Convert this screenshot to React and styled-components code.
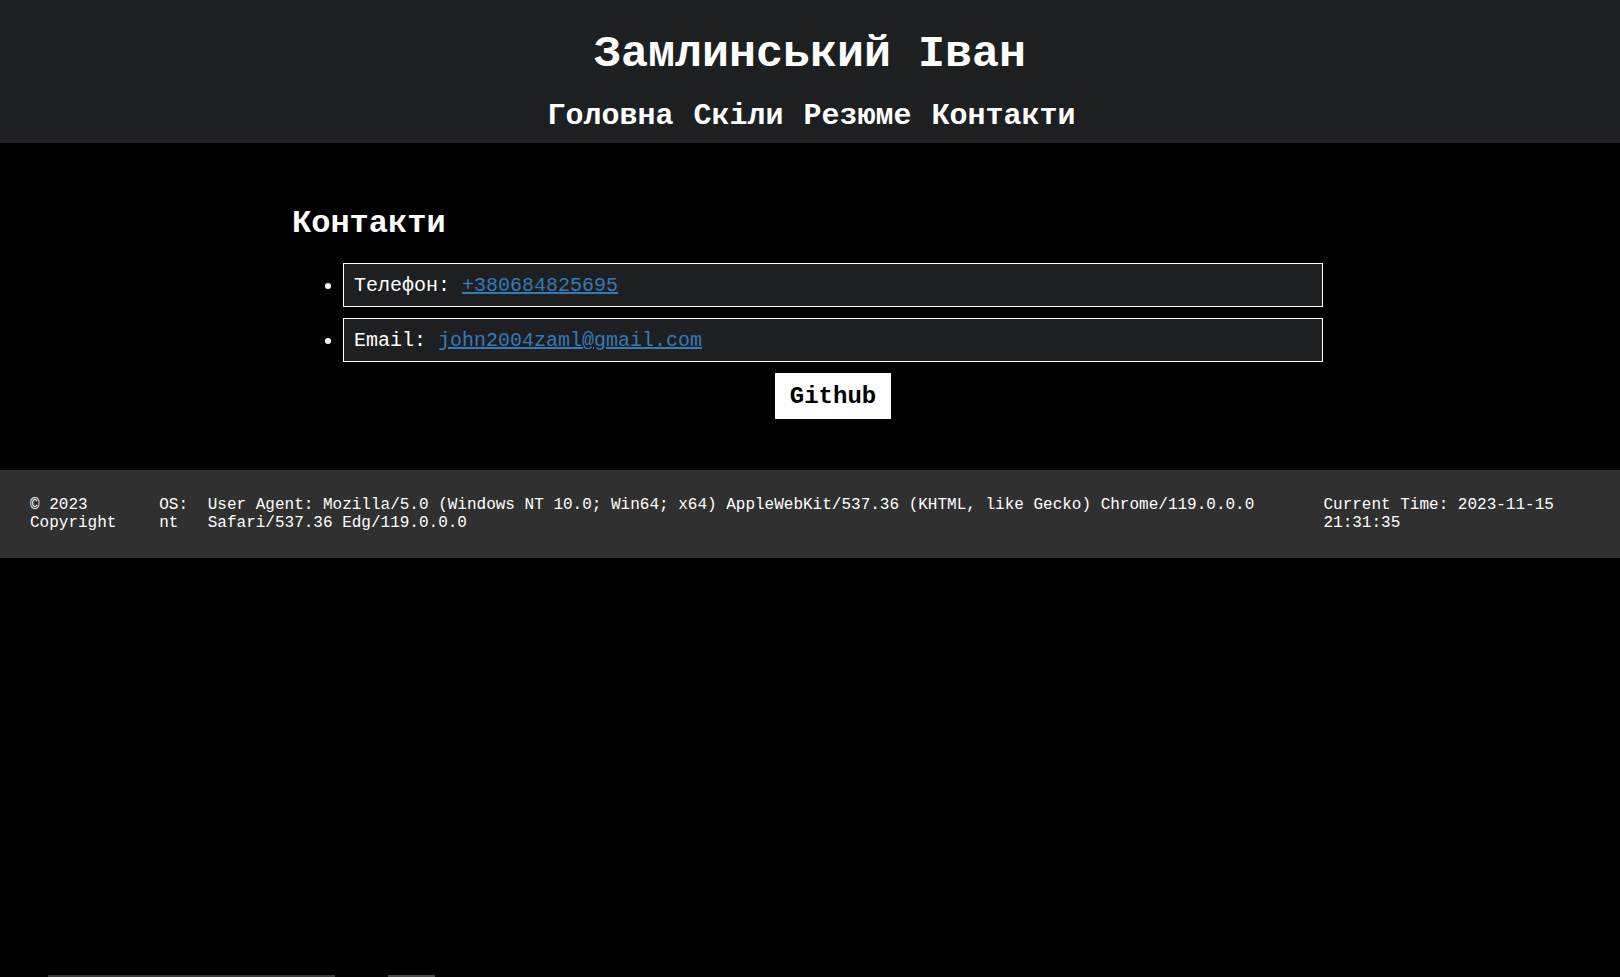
import React from "react";
import styled, { createGlobalStyle } from "styled-components";

const Global = createGlobalStyle`
  html, body { margin: 0; padding: 0; background: #000; }
  body {
    font-family: "Liberation Mono", "Courier New", monospace;
    color: #fff;
    min-height: 977px;
  }
  * { box-sizing: border-box; }
`;

const Header = styled.header`
  background: #1e1f21;
  padding: 29px 0 10px;
  text-align: center;
`;

const Title = styled.h1`
  margin: 0 0 19px;
  font-size: 45px;
  font-weight: 700;
  line-height: 51px;
  color: #fff;
`;

const Nav = styled.nav`
  display: flex;
  justify-content: center;
  gap: 20px;
  padding-left: 3px;
`;

const NavLink = styled.a`
  font-size: 30px;
  font-weight: 700;
  line-height: 34px;
  color: #fff;
  text-decoration: none;
`;

const Main = styled.main`
  max-width: 1036px;
  margin: 0 auto;
  padding: 63px 0 51px;
`;

const SectionTitle = styled.h2`
  margin: 0 0 21px;
  font-size: 32px;
  font-weight: 700;
  line-height: 36px;
`;

const List = styled.ul`
  margin: 0;
  padding: 0 5px 0 51px;
  list-style: disc;
`;

const Item = styled.li`
  background: #1e1f21;
  border: 1px solid #fff;
  padding: 11px 10px 9px;
  margin-bottom: 11px;
  font-size: 20px;
  line-height: 22px;
  color: #fff;
`;

const ItemLink = styled.a`
  color: #337ab7;
  text-decoration: underline;
`;

const ButtonRow = styled.div`
  display: flex;
  justify-content: center;
  padding: 0 5px 0 51px;
`;

const Button = styled.a`
  display: inline-block;
  background: #fff;
  color: #000;
  font-size: 24px;
  font-weight: 700;
  line-height: 28px;
  padding: 10px 15px 8px;
  text-decoration: none;
`;

const Footer = styled.footer`
  background: #303030;
  padding: 26px 30px 25px;
  display: flex;
  justify-content: space-between;
  font-size: 16px;
  line-height: 18.4px;
  color: #fff;
`;

const FooterCell = styled.div`
  margin-left: ${(p) => (p.$offset ? `${p.$offset}px` : "0")};
`;

const BottomStrip = styled.div`
  position: fixed;
  left: 48px;
  bottom: 0;
  display: flex;
  align-items: flex-end;
  gap: 53px;
`;

const StripBar = styled.div`
  width: ${(p) => p.$w}px;
  height: 2px;
  background: ${(p) => p.$c};
`;

export default function App() {
  return (
    <>
      <Global />
      <Header>
        <Title>Замлинський Іван</Title>
        <Nav>
          <NavLink href="#">Головна</NavLink>
          <NavLink href="#">Скіли</NavLink>
          <NavLink href="#">Резюме</NavLink>
          <NavLink href="#">Контакти</NavLink>
        </Nav>
      </Header>
      <Main>
        <SectionTitle>Контакти</SectionTitle>
        <List>
          <Item>
            Телефон: <ItemLink href="#">+380684825695</ItemLink>
          </Item>
          <Item>
            Email: <ItemLink href="#">john2004zaml@gmail.com</ItemLink>
          </Item>
        </List>
        <ButtonRow>
          <Button href="#">Github</Button>
        </ButtonRow>
      </Main>
      <Footer>
        <FooterCell>© 2023 Copyright</FooterCell>
        <FooterCell>OS: nt</FooterCell>
        <FooterCell>
          User Agent: Mozilla/5.0 (Windows NT 10.0; Win64; x64) AppleWebKit/537.36 (KHTML, like Gecko) Chrome/119.0.0.0 Safari/537.36 Edg/119.0.0.0
        </FooterCell>
        <FooterCell $offset={9}>Current Time: 2023-11-15 21:31:35</FooterCell>
      </Footer>
      <BottomStrip>
        <StripBar $w={287} $c="#3a3a3a" />
        <StripBar $w={47} $c="#4a4a4a" />
      </BottomStrip>
    </>
  );
}
